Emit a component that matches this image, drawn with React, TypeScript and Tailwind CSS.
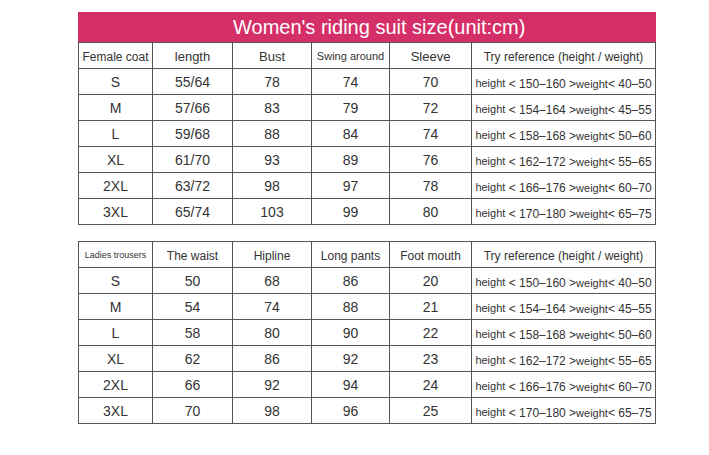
const coatHead = [
  { label: 'Female coat', size: 'text-[12px]' },
  { label: 'length', size: 'text-[13px]' },
  { label: 'Bust', size: 'text-[13px]' },
  { label: 'Swing around', size: 'text-[11px]' },
  { label: 'Sleeve', size: 'text-[13px]' },
  { label: 'Try reference (height / weight)', size: 'text-[12px]' },
];

const pantsHead = [
  { label: 'Ladies trousers', size: 'text-[9px]' },
  { label: 'The waist', size: 'text-[12px]' },
  { label: 'Hipline', size: 'text-[12px]' },
  { label: 'Long pants', size: 'text-[12px]' },
  { label: 'Foot mouth', size: 'text-[12px]' },
  { label: 'Try reference (height / weight)', size: 'text-[12px]' },
];

const refs = [
  ['150–160', '40–50'],
  ['154–164', '45–55'],
  ['158–168', '50–60'],
  ['162–172', '55–65'],
  ['166–176', '60–70'],
  ['170–180', '65–75'],
];

const coatRows = [
  ['S', '55/64', '78', '74', '70'],
  ['M', '57/66', '83', '79', '72'],
  ['L', '59/68', '88', '84', '74'],
  ['XL', '61/70', '93', '89', '76'],
  ['2XL', '63/72', '98', '97', '78'],
  ['3XL', '65/74', '103', '99', '80'],
];

const pantsRows = [
  ['S', '50', '68', '86', '20'],
  ['M', '54', '74', '88', '21'],
  ['L', '58', '80', '90', '22'],
  ['XL', '62', '86', '92', '23'],
  ['2XL', '66', '92', '94', '24'],
  ['3XL', '70', '98', '96', '25'],
];

const cell =
  'h-[26px] border-r border-b border-[#555] flex items-center justify-center pt-[2px] whitespace-nowrap';

function Ref({ h, w }: { h: string; w: string }) {
  return (
    <span className="leading-none">
      <span className="text-[11px] relative -top-[1px]">height</span>
      <span className="text-[12px]"> &lt; {h} &gt;</span>
      <span className="text-[11px]">weight</span>
      <span className="text-[12px]">&lt; {w}</span>
    </span>
  );
}

function SizeTable({
  head,
  rows,
}: {
  head: { label: string; size: string }[];
  rows: string[][];
}) {
  return (
    <div className="grid w-[578px] grid-cols-[74px_80px_79px_78px_82px_184px] border-l border-t border-[#555]">
      {head.map((h) => (
        <div key={h.label} className={`${cell} ${h.size}`}>
          {h.label}
        </div>
      ))}
      {rows.map((r, i) => (
        <div key={r[0]} className="contents">
          {r.map((v, j) => (
            <div key={j} className={`${cell} text-[14px]`}>
              {v}
            </div>
          ))}
          <div className={cell}>
            <Ref h={refs[i][0]} w={refs[i][1]} />
          </div>
        </div>
      ))}
    </div>
  );
}

export default function App() {
  return (
    <div className="min-h-screen bg-white pl-[78px] pt-[12px] text-[#333] font-['Liberation_Sans',Arial,sans-serif]">
      <div className="h-[30px] w-[578px] bg-[#d42f68] pl-[155px] text-[20px] leading-[30px] text-white">
        Women's riding suit size(unit:cm)
      </div>
      <SizeTable head={coatHead} rows={coatRows} />
      <div className="mt-[16px]">
        <SizeTable head={pantsHead} rows={pantsRows} />
      </div>
    </div>
  );
}
